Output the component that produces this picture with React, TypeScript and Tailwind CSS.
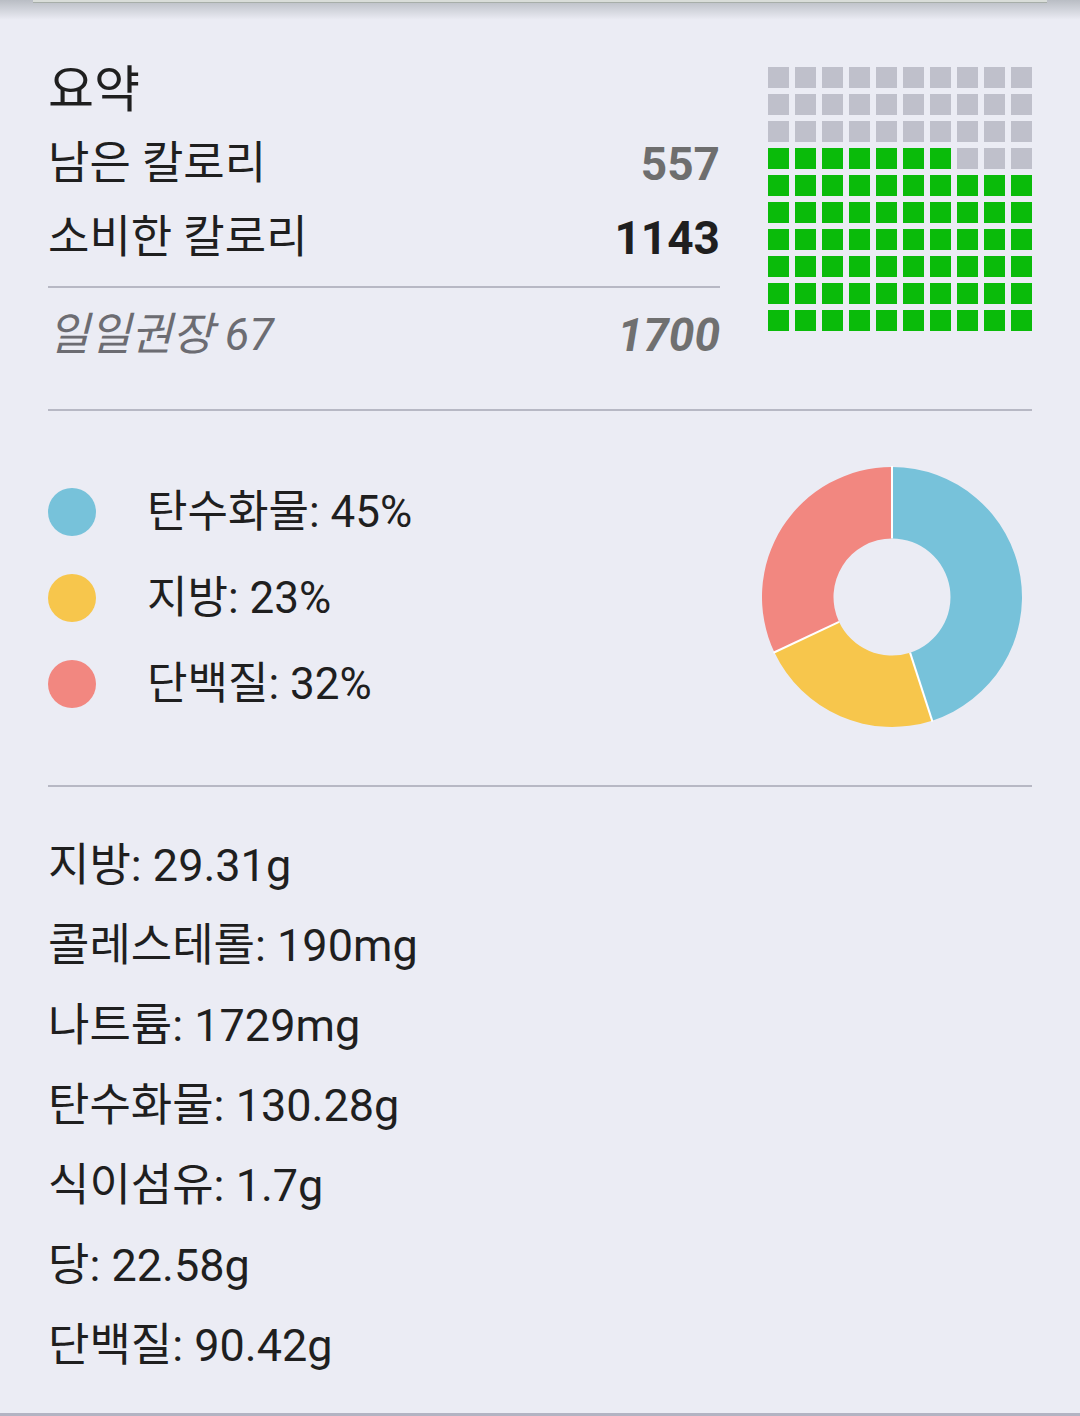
import React from "react"

const FONT = { fontFamily: 'Roboto, "Noto Sans CJK KR", sans-serif' }

const macros = [
  { label: "탄수화물", pct: 45, color: "#77c2da" },
  { label: "지방", pct: 23, color: "#f7c64c" },
  { label: "단백질", pct: 32, color: "#f28780" },
]

const nutrients = [
  "지방: 29.31g",
  "콜레스테롤: 190mg",
  "나트륨: 1729mg",
  "탄수화물: 130.28g",
  "식이섬유: 1.7g",
  "당: 22.58g",
  "단백질: 90.42g",
]

// 10x10 cells, filled row by row from the bottom, left to right
function CalorieGrid({ used }: { used: number }) {
  const cells = Array.from({ length: 100 }, (_, i) => {
    const row = Math.floor(i / 10)
    const col = i % 10
    return (9 - row) * 10 + col < used
  })
  return (
    <div className="grid grid-cols-[repeat(10,21px)] auto-rows-[21px] gap-[6px]">
      {cells.map((on, i) => (
        <div key={i} className={on ? "bg-[#0abb0a]" : "bg-[#bfc0cb]"} />
      ))}
    </div>
  )
}

function Donut() {
  const cx = 131
  const cy = 131
  const R = 130
  const r = 58.5
  const pt = (rad: number, deg: number) => {
    const a = ((deg - 90) * Math.PI) / 180
    return [cx + rad * Math.cos(a), cy + rad * Math.sin(a)]
  }
  let start = 0
  const slices = macros.map((m) => {
    const end = start + (m.pct / 100) * 360
    const large = end - start > 180 ? 1 : 0
    const [x1, y1] = pt(R, start)
    const [x2, y2] = pt(R, end)
    const [x3, y3] = pt(r, end)
    const [x4, y4] = pt(r, start)
    const d = `M${x1} ${y1} A${R} ${R} 0 ${large} 1 ${x2} ${y2} L${x3} ${y3} A${r} ${r} 0 ${large} 0 ${x4} ${y4} Z`
    const s = { d, color: m.color, start }
    start = end
    return s
  })
  return (
    <svg width="262" height="262" viewBox="0 0 262 262" className="shrink-0">
      {slices.map((s, i) => (
        <path key={i} d={s.d} fill={s.color} />
      ))}
      {slices.map((s, i) => {
        const [a, b] = pt(r, s.start)
        const [c, d] = pt(R + 1, s.start)
        return <line key={i} x1={a} y1={b} x2={c} y2={d} stroke="#ffffff" strokeWidth="2" />
      })}
    </svg>
  )
}

export default function App() {
  return (
    <div className="w-[1080px] h-[1416px] bg-[#ebecf4] flex flex-col overflow-hidden text-[#1f1f1f]" style={FONT}>
      {/* shadow of the card above */}
      <div className="h-[20px] shrink-0 bg-gradient-to-b from-[#b9bdc4] to-[#ebecf4]">
        <div className="mx-[33px] h-[3px] bg-[#d9ddd9] border-b border-[#a7aea9]" />
      </div>

      <div className="px-[48px] flex flex-col flex-1">
        {/* summary */}
        <section className="flex h-[389px] shrink-0">
          <div className="w-[672px] flex flex-col pt-[33px]">
            <div className="h-[74px] flex items-center text-[50px]">요약</div>
            <div className="h-[74px] flex items-center justify-between text-[45px]">
              <span>남은 칼로리</span>
              <span className="text-[46px] font-bold text-[#6e6e6e]">557</span>
            </div>
            <div className="h-[74px] flex items-center justify-between text-[45px]">
              <span>소비한 칼로리</span>
              <span className="text-[46px] font-bold">1143</span>
            </div>
            <div className="mt-[11px] h-[2px] bg-[#b7b8c4]" />
            <div className="mt-[10px] h-[74px] flex items-center justify-between text-[45px] italic text-[#6c6c72]">
              <span>일일권장 67</span>
              <span className="text-[46px] font-bold text-[#707070]">1700</span>
            </div>
          </div>
          <div className="ml-[48px] mt-[47px]">
            <CalorieGrid used={67} />
          </div>
        </section>

        <div className="h-[2px] shrink-0 bg-[#b7b8c4]" />

        {/* macro split */}
        <section className="flex h-[374px] shrink-0">
          <div className="flex flex-col pt-[58px]">
            {macros.map((m) => (
              <div key={m.label} className="h-[86px] flex items-center gap-[51px]">
                <div className="w-12 h-12 rounded-full" style={{ backgroundColor: m.color }} />
                <span className="text-[44px]">
                  {m.label}: {m.pct}%
                </span>
              </div>
            ))}
          </div>
          <div className="ml-auto mr-[9px] mt-[55px]">
            <Donut />
          </div>
        </section>

        <div className="h-[2px] shrink-0 bg-[#b7b8c4]" />

        {/* nutrients */}
        <section className="flex flex-col pt-[39px] flex-1">
          {nutrients.map((n) => (
            <div key={n} className="h-[80px] flex items-center text-[45px]">
              {n}
            </div>
          ))}
        </section>
      </div>

      <div className="h-[3px] shrink-0 bg-[#b2b3c2]" />
    </div>
  )
}
